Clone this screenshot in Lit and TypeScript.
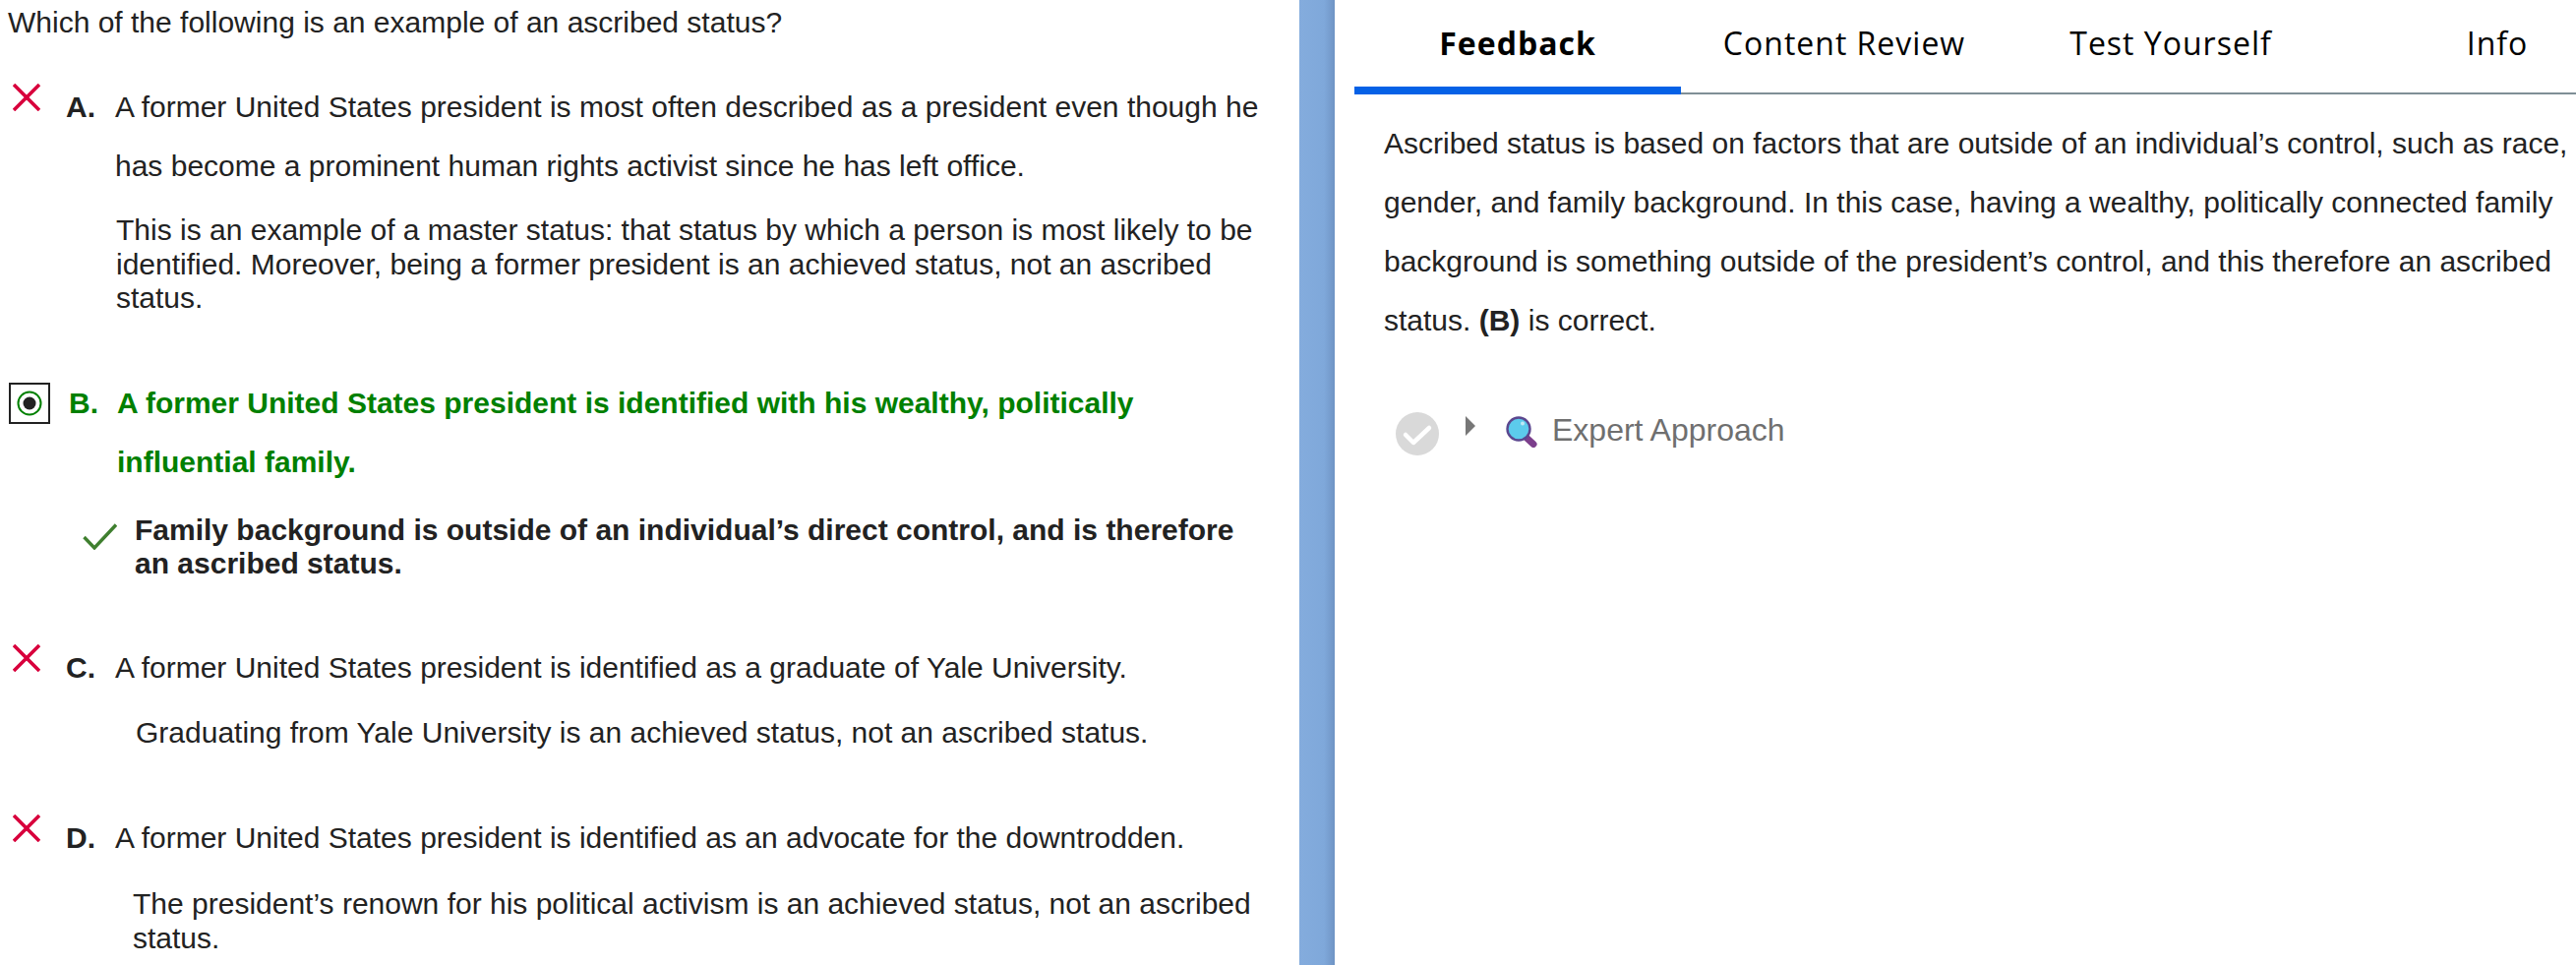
import { html, css, LitElement, svg } from "lit";
import { customElement } from "lit/decorators.js";

const cross = html`<svg class="cross" width="28" height="28" viewBox="0 0 28 28">
  <path d="M1 1L27 27M27 1L1 27" stroke="#d8003c" stroke-width="3.6" fill="none" />
</svg>`;

const magnifier = svg`
  <path d="M21.5 22.5L28 28.5" stroke="#7c3f8c" stroke-width="7" stroke-linecap="round" />
  <circle cx="13" cy="13" r="11.5" fill="#5ccbec" stroke="#5b478f" stroke-width="2.4" />
  <circle cx="17" cy="7.5" r="2" fill="#bfe9f6" />
`;

@customElement("app-root")
export class AppRoot extends LitElement {
  static styles = css`
    :host {
      display: flex;
      width: 2619px;
      height: 981px;
      overflow: hidden;
      background: #fff;
      color: #222;
      font-family: "Liberation Sans", Arial, sans-serif;
      font-size: 30px;
    }

    .left {
      flex: 0 0 1321px;
      box-sizing: border-box;
      padding: 6px 38px 0 8px;
    }

    .divider {
      flex: 0 0 36px;
      background: linear-gradient(to right, #84acdd 0, #7fa8da 70%, #6f94c4 100%);
    }

    .right {
      flex: 1;
      min-width: 0;
      overflow: hidden;
    }

    .question {
      line-height: 34px;
    }

    .option {
      display: flex;
      position: relative;
      line-height: 60px;
    }

    .mark {
      flex: 0 0 59px;
      box-sizing: border-box;
      padding: 6px 0 0 5px;
      line-height: 0;
    }

    .letter {
      flex: 0 0 50px;
      font-weight: 700;
    }

    .body {
      flex: 1;
      min-width: 0;
    }

    .why {
      line-height: 34.5px;
    }

    .a { margin-top: 39px; }
    .a .why { margin-top: 18px; margin-left: 1px; }
    .b { margin-top: 59px; color: #008000; font-weight: 700; }
    .b .mark { flex-basis: 62px; padding: 0 0 0 1px; }
    .b .letter { flex-basis: 49px; }
    .c { margin-top: 58px; }
    .c .why { margin: 19px 0 0 21px; }
    .d { margin-top: 60px; }
    .d .why { margin: 20px 0 0 18px; }

    .radio-box {
      display: flex;
      align-items: center;
      justify-content: center;
      box-sizing: border-box;
      width: 42px;
      height: 42px;
      margin-top: 9px;
      border: 2px solid #222;
    }

    .why-right {
      display: flex;
      align-items: flex-start;
      margin: 22px 0 0 -35px;
      color: #222;
      line-height: 34.5px;
    }

    .why-right svg {
      flex: 0 0 35px;
      margin: 10px 18px 0 0;
    }

    .tabs {
      display: flex;
      height: 94px;
      margin-left: 20px;
      border-bottom: 2px solid #7f8f96;
      font-family: "Open Sans", sans-serif;
      font-size: 32px;
      letter-spacing: 1px;
      color: #000;
    }

    .tab {
      position: relative;
      flex: 0 0 332px;
      text-align: center;
      line-height: 88px;
    }

    .tab.active {
      font-weight: 700;
    }

    .tab.active::after {
      content: "";
      position: absolute;
      left: 0;
      right: 0;
      bottom: -2px;
      height: 8px;
      background: #0561e6;
    }

    .feedback {
      padding: 20px 0 0 50px;
      line-height: 60px;
    }

    .expert {
      display: flex;
      align-items: flex-start;
      margin: 63px 0 0 62px;
      color: #6f6f6f;
      font-size: 32px;
    }

    .check-dot {
      flex: 0 0 44px;
      margin-right: 27px;
    }

    .caret {
      width: 0;
      height: 0;
      margin: 4px 31px 0 0;
      border-left: 10px solid #777;
      border-top: 10px solid transparent;
      border-bottom: 10px solid transparent;
    }

    .lens {
      margin: 4px 15px 0 0;
    }

    .expert-label {
      line-height: 37px;
    }
  `;

  render() {
    return html`
      <div class="left">
        <div class="question">Which of the following is an example of an ascribed status?</div>

        <div class="option a">
          <div class="mark">${cross}</div>
          <div class="letter">A.</div>
          <div class="body">
            A former United States president is most often described as a president even though he has become a prominent human rights activist since he has left office.
            <div class="why">This is an example of a master status: that status by which a person is most likely to be identified. Moreover, being a former president is an achieved status, not an ascribed status.</div>
          </div>
        </div>

        <div class="option b">
          <div class="mark">
            <div class="radio-box">
              <svg width="26" height="26" viewBox="0 0 26 26">
                <circle cx="13" cy="13" r="11.5" fill="#fff" stroke="#008000" stroke-width="2" />
                <circle cx="13" cy="13" r="6.5" fill="#222" />
              </svg>
            </div>
          </div>
          <div class="letter">B.</div>
          <div class="body">
            A former United States president is identified with his wealthy, politically influential family.
            <div class="why-right">
              <svg width="35" height="27" viewBox="0 0 35 27">
                <path d="M1.5 14L12 25L34 1.5" stroke="#3f7f2f" stroke-width="3.4" fill="none" />
              </svg>
              <div>Family background is outside of an individual’s direct control, and is therefore an ascribed status.</div>
            </div>
          </div>
        </div>

        <div class="option c">
          <div class="mark">${cross}</div>
          <div class="letter">C.</div>
          <div class="body">
            A former United States president is identified as a graduate of Yale University.
            <div class="why">Graduating from Yale University is an achieved status, not an ascribed status.</div>
          </div>
        </div>

        <div class="option d">
          <div class="mark">${cross}</div>
          <div class="letter">D.</div>
          <div class="body">
            A former United States president is identified as an advocate for the downtrodden.
            <div class="why">The president’s renown for his political activism is an achieved status, not an ascribed status.</div>
          </div>
        </div>
      </div>

      <div class="divider"></div>

      <div class="right">
        <div class="tabs">
          <div class="tab active">Feedback</div>
          <div class="tab">Content Review</div>
          <div class="tab">Test Yourself</div>
          <div class="tab">Info</div>
        </div>
        <div class="feedback">
          Ascribed status is based on factors that are outside of an individual’s control, such as race, gender, and family background. In this case, having a wealthy, politically connected family background is something outside of the president’s control, and this therefore an ascribed status. <b>(B)</b> is correct.
        </div>
        <div class="expert">
          <svg class="check-dot" width="44" height="44" viewBox="0 0 44 44">
            <circle cx="22" cy="22" r="22" fill="#d9d9d9" />
            <path d="M10 23L18 31L34 16" stroke="#fff" stroke-width="4.5" stroke-linecap="round" stroke-linejoin="round" fill="none" />
          </svg>
          <div class="caret"></div>
          <svg class="lens" width="32" height="32" viewBox="0 0 32 32">${magnifier}</svg>
          <div class="expert-label">Expert Approach</div>
        </div>
      </div>
    `;
  }
}

declare global {
  interface HTMLElementTagNameMap {
    "app-root": AppRoot;
  }
}
